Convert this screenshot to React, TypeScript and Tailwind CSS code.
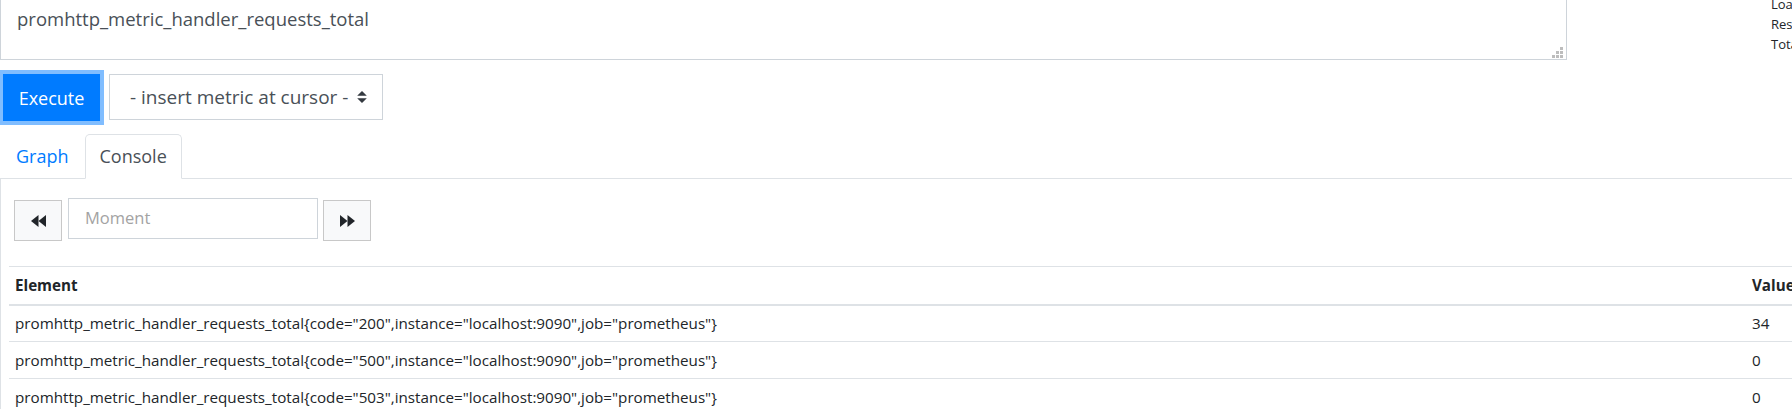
import React from 'react';

const rows = [
  { labels: 'promhttp_metric_handler_requests_total{code="200",instance="localhost:9090",job="prometheus"}', value: '34' },
  { labels: 'promhttp_metric_handler_requests_total{code="500",instance="localhost:9090",job="prometheus"}', value: '0' },
  { labels: 'promhttp_metric_handler_requests_total{code="503",instance="localhost:9090",job="prometheus"}', value: '0' },
];

function Backward() {
  return (
    <svg width="15" height="12" viewBox="0 0 15 12" fill="#212529">
      <polygon points="7.5,0 0,6 7.5,12" />
      <polygon points="15,0 7.5,6 15,12" />
    </svg>
  );
}

function Forward() {
  return (
    <svg width="15" height="12" viewBox="0 0 15 12" fill="#212529">
      <polygon points="0,0 7.5,6 0,12" />
      <polygon points="7.5,0 15,6 7.5,12" />
    </svg>
  );
}

export default function App() {
  return (
    <div className="w-[1792px] h-[409px] overflow-hidden bg-white text-[#212529] font-['Open_Sans',sans-serif]">
      {/* expression input + query stats */}
      <div className="flex items-start">
        <div className="relative w-[1567px] h-[60px] shrink-0 border border-t-0 border-[#ced4da] pl-[16px] pt-[5px] text-[18.5px] leading-[28px] text-[#495057]">
          promhttp_metric_handler_requests_total
          <svg className="absolute right-[3px] bottom-[1px]" width="11" height="11" viewBox="0 0 11 11" fill="#bdbdbd">
            <rect x="8" y="0" width="3" height="3" />
            <rect x="4" y="4" width="3" height="3" />
            <rect x="8" y="4" width="3" height="3" />
            <rect x="0" y="8" width="3" height="3" />
            <rect x="4" y="8" width="3" height="3" />
            <rect x="8" y="8" width="3" height="3" />
          </svg>
        </div>
        <div className="ml-[204px] -mt-[6px] shrink-0 whitespace-nowrap text-[13px] leading-[20px] text-[#212529]">
          <div>Load time: 23ms</div>
          <div>Resolution: 14s</div>
          <div>Total time series: 3</div>
        </div>
      </div>

      {/* execute + metric select */}
      <div className="mt-[14px] flex items-start">
        <button className="ml-[3px] h-[47px] w-[97px] bg-[#007bff] text-white text-[18px] leading-[28px] shadow-[0_0_0_4px_#80bdff]">
          Execute
        </button>
        <div className="ml-[9px] flex h-[46px] w-[274px] items-center border border-[#ced4da] pl-[20px] text-[19px] text-[#495057]">
          <span>- insert metric at cursor -</span>
          <svg className="ml-[9px]" width="10" height="12" viewBox="0 0 4 5" fill="#343a40">
            <path d="M2 0L0 2h4zm0 5L0 3h4z" />
          </svg>
        </div>
      </div>

      {/* tabs */}
      <div className="mt-[13px] flex border-b border-[#dee2e6] text-[18px] leading-[28px]">
        <div className="px-[15px] py-[7px] text-[#007bff] border border-transparent">Graph</div>
        <div className="-mb-px px-[14px] py-[7px] text-[#495057] bg-white border border-[#dee2e6] border-b-white rounded-t-[5px]">
          Console
        </div>
      </div>

      {/* console panel */}
      <div className="border-l border-[#dee2e6] pt-[19px]">
        <div className="flex items-start pl-[13px]">
          <button className="mt-[2px] flex h-[41px] w-[48px] items-center justify-center border border-[#c8c8c8] bg-[#f8f9fa]">
            <Backward />
          </button>
          <div className="ml-[6px] flex h-[41px] w-[250px] items-center border border-[#ced4da] pl-[16px] text-[16.5px] text-[#a3a3a3]">
            Moment
          </div>
          <button className="ml-[5px] mt-[2px] flex h-[41px] w-[48px] items-center justify-center border border-[#c8c8c8] bg-[#f8f9fa]">
            <Forward />
          </button>
        </div>

        <table className="mt-[25px] ml-[8px] w-[1900px] table-fixed border-collapse text-[15.2px] text-[#212529]">
          <colgroup>
            <col className="w-[1737px]" />
            <col />
          </colgroup>
          <thead>
            <tr className="h-[38px] border-t border-b-2 border-[#dee2e6]">
              <th className="px-[6px] text-left font-bold">Element</th>
              <th className="px-[6px] text-left font-bold">Value</th>
            </tr>
          </thead>
          <tbody>
            {rows.map((r) => (
              <tr key={r.labels} className="h-[37px] border-b border-[#dee2e6]">
                <td className="px-[6px] whitespace-nowrap">{r.labels}</td>
                <td className="px-[6px]">{r.value}</td>
              </tr>
            ))}
          </tbody>
        </table>
      </div>
    </div>
  );
}
